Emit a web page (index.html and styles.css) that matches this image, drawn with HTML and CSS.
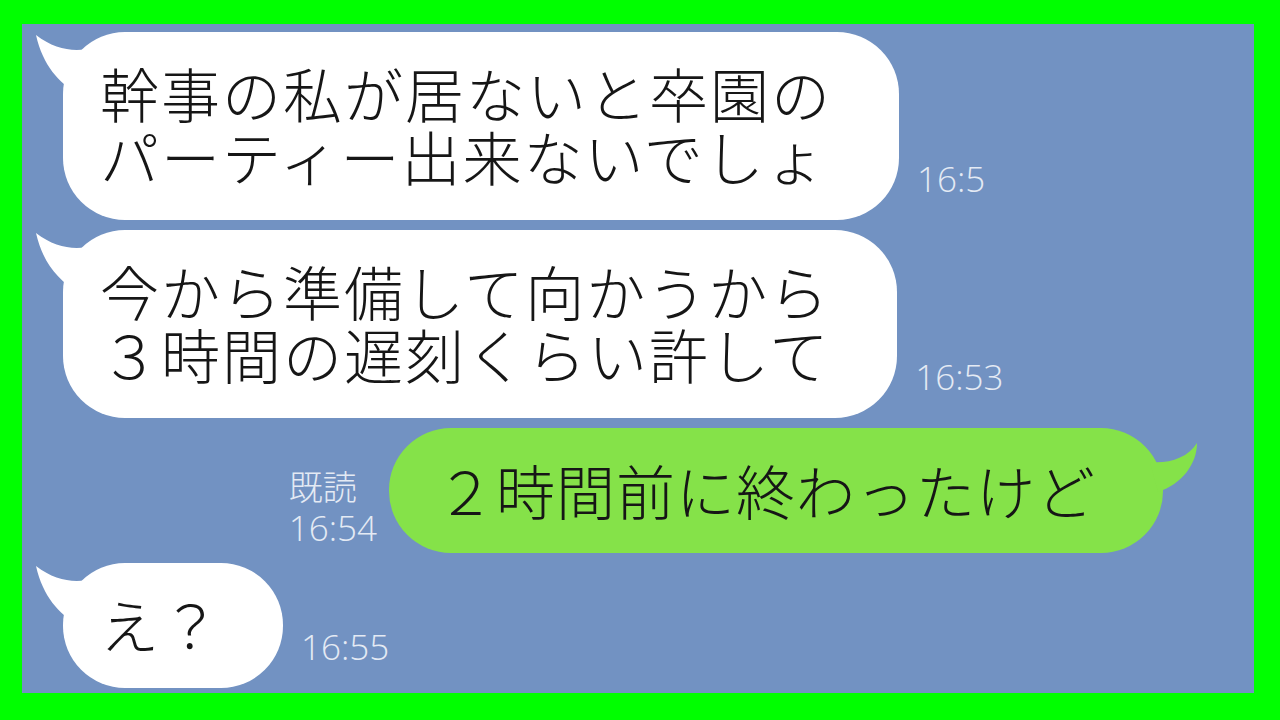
FILE: index.html
```html
<!DOCTYPE html>
<html lang="ja">
<head>
<meta charset="utf-8">
<title>Chat</title>
<link rel="stylesheet" href="styles.css">
</head>
<body>
<div class="frame">
  <div class="chat">
    <div class="row row-in">
      <div class="bubble bubble-in">
        <svg class="tail tail-in" viewBox="0 0 80 70" width="80" height="70"><path d="M3,3 C10,34 26,50 44,62 L78,8 C58,20 30,24 3,3 Z" fill="#ffffff"/></svg>
        <div class="msg"><span class="line">幹事の私が居ないと卒園の</span><span class="line">パーティー出来ないでしょ</span></div>
      </div>
      <span class="time">16:5</span>
    </div>
    <div class="row row-in">
      <div class="bubble bubble-in">
        <svg class="tail tail-in" viewBox="0 0 80 70" width="80" height="70"><path d="M3,3 C10,34 26,50 44,62 L78,8 C58,20 30,24 3,3 Z" fill="#ffffff"/></svg>
        <div class="msg"><span class="line">今から準備して向かうから</span><span class="line">３時間の遅刻くらい許して</span></div>
      </div>
      <span class="time">16:53</span>
    </div>
    <div class="row row-out">
      <div class="meta">
        <span class="read">既読</span>
        <span class="time time-out">16:54</span>
      </div>
      <div class="bubble bubble-out">
        <svg class="tail tail-out" viewBox="0 0 60 70" width="60" height="70"><path d="M2,34 C20,36 40,30 49,15 C49,36 34,56 10,64 Z" fill="#85e249"/></svg>
        <div class="msg msg-out"><span class="line">２時間前に終わったけど</span></div>
      </div>
    </div>
    <div class="row row-in">
      <div class="bubble bubble-in bubble-short">
        <svg class="tail tail-in" viewBox="0 0 80 70" width="80" height="70"><path d="M3,3 C10,34 26,50 44,62 L78,8 C58,20 30,24 3,3 Z" fill="#ffffff"/></svg>
        <div class="msg"><span class="line">え？</span></div>
      </div>
      <span class="time">16:55</span>
    </div>
  </div>
</div>
</body>
</html>
```
FILE: styles.css
```css
html, body {
  margin: 0;
  padding: 0;
}
body {
  width: 1280px;
  height: 720px;
  background: #00ff00;
  overflow: hidden;
}
.frame {
  padding: 24px 26px 27px 22px;
  height: 720px;
  box-sizing: border-box;
}
.chat {
  height: 100%;
  background: #7292c2;
  display: flex;
  flex-direction: column;
  gap: 10px;
  padding-top: 8px;
  box-sizing: border-box;
}
.row {
  display: flex;
  align-items: flex-end;
}
.row-in {
  padding-left: 41px;
}
.row-out {
  justify-content: flex-end;
  padding-right: 91px;
}
.bubble {
  position: relative;
  border-radius: 62px;
}
.bubble-in {
  background: #ffffff;
  padding: 29px 67px 33px 37px;
}
.bubble-short {
  padding-right: 61px;
}
.bubble-out {
  background: #85e249;
  padding: 30px 67px 32px 47px;
}
.tail {
  position: absolute;
  top: 0;
  display: block;
}
.tail-in {
  left: -30px;
}
.tail-out {
  right: -45px;
}
.msg {
  position: relative;
  margin: 0;
  font-family: "Noto Sans CJK JP", "Noto Sans", sans-serif;
  font-weight: 300;
  font-size: 59px;
  line-height: 63px;
  letter-spacing: 2px;
  color: #161616;
  white-space: nowrap;
}
.line {
  display: block;
  height: 63px;
}
.msg-out {
  letter-spacing: 1px;
}
.time {
  font-family: "Open Sans", "Noto Sans", sans-serif;
  font-weight: 300;
  font-size: 35px;
  line-height: 35px;
  color: #e4eaf4;
  margin-left: 18px;
  margin-bottom: 24px;
}
.meta {
  display: flex;
  flex-direction: column;
  margin-right: 12px;
  margin-bottom: 4px;
}
.read {
  font-family: "Noto Sans CJK JP", sans-serif;
  font-weight: 300;
  font-size: 34px;
  line-height: 42px;
  height: 42px;
  color: #e4eaf4;
}
.time-out {
  margin: 0;
  line-height: 42px;
  height: 42px;
}
```
